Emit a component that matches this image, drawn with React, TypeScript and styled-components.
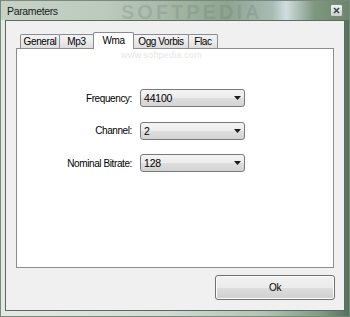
import { FC, Fragment } from 'react';
import styled, { createGlobalStyle } from 'styled-components';

const GlobalStyle = createGlobalStyle`
  html, body {
    margin: 0;
    padding: 0;
    background: #ffffff;
  }
  body {
    font-family: "Liberation Sans", Arial, sans-serif;
  }
`;

const Frame = styled.div`
  position: relative;
  box-sizing: border-box;
  width: 350px;
  height: 317px;
  display: flex;
  flex-direction: column;
  overflow: hidden;
  border: 1px solid #7b887d;
  background: linear-gradient(
    90deg,
    #e3eae4 0%,
    #d3ddd4 45%,
    #b3c4b4 75%,
    #7f9b82 92%,
    #52745a 100%
  );
`;

const TitleBar = styled.div`
  position: relative;
  height: 19px;
  display: flex;
  align-items: center;
  justify-content: space-between;
  padding: 0 6px 0 6px;
  background: linear-gradient(
    90deg,
    #c7d2c7 0%,
    #bccabd 30%,
    #a3b6a5 50%,
    #8ea490 65%,
    #a8bcb4 78%,
    #d0dde0 82%,
    #7e9880 90%,
    #6a876d 100%
  );
`;

const Title = styled.span`
  position: relative;
  z-index: 1;
  font-size: 10.5px;
  letter-spacing: -0.35px;
  color: #1a1a1a;
  margin-top: 1px;
`;

const Watermark = styled.span`
  position: absolute;
  left: 120px;
  top: 0;
  font-size: 20px;
  font-weight: bold;
  letter-spacing: 3px;
  color: rgba(100, 112, 106, 0.22);
`;

const CloseButton = styled.div`
  position: relative;
  z-index: 1;
  box-sizing: border-box;
  width: 13px;
  height: 13px;
  display: flex;
  align-items: center;
  justify-content: center;
  border: 1px solid #7d8a80;
  border-radius: 2px;
  background: linear-gradient(180deg, #eef2ef 0%, #c9d2cb 100%);
`;

const Client = styled.div`
  position: relative;
  flex: 1;
  margin: 0 4px 5px 4px;
  display: flex;
  flex-direction: column;
  padding: 11px 10px 10px 10px;
  background: #f0f0f0;
  border: 1px solid #5f6862;
`;

const TabStrip = styled.div`
  display: flex;
  align-items: flex-end;
  height: 16px;
  padding-left: 4px;
`;

const Tab = styled.div<{ $w: number; $active?: boolean }>`
  position: relative;
  box-sizing: border-box;
  width: ${({ $w }) => $w}px;
  height: ${({ $active }) => ($active ? 17 : 14)}px;
  margin-right: -1px;
  margin-bottom: ${({ $active }) => ($active ? -1 : 0)}px;
  z-index: ${({ $active }) => ($active ? 2 : 1)};
  display: flex;
  align-items: center;
  justify-content: center;
  padding-bottom: ${({ $active }) => ($active ? 2 : 0)}px;
  font-size: 10px;
  letter-spacing: -0.4px;
  color: #000;
  border: 1px solid #898c95;
  border-bottom: none;
  border-radius: 2px 2px 0 0;
  background: ${({ $active }) =>
    $active ? '#ffffff' : 'linear-gradient(180deg, #f3f3f3 0%, #ebebeb 50%, #dedede 100%)'};
`;

const Panel = styled.div`
  position: relative;
  flex: 1;
  box-sizing: border-box;
  background: #ffffff;
  border: 1px solid #898c95;
  padding-top: 40px;
`;

const SiteMark = styled.span`
  position: absolute;
  left: 104px;
  top: 1px;
  font-size: 9px;
  color: #e6e6e6;
  letter-spacing: 0.2px;
`;

const Form = styled.div`
  display: grid;
  grid-template-columns: 115px 105px;
  column-gap: 8px;
  row-gap: 14.5px;
  align-items: center;
`;

const Label = styled.label`
  text-align: right;
  font-size: 10px;
  letter-spacing: -0.4px;
  color: #000;
`;

const Combo = styled.div`
  box-sizing: border-box;
  height: 18px;
  display: flex;
  align-items: center;
  justify-content: space-between;
  padding: 0 3px 0 3px;
  border: 1px solid #7a7a7a;
  border-radius: 3px;
  background: linear-gradient(180deg, #f4f4f4 0%, #ececec 50%, #dfdfdf 51%, #d3d3d3 100%);
  font-size: 10.5px;
  letter-spacing: -0.2px;
  color: #000;
`;

const Footer = styled.div`
  display: flex;
  justify-content: flex-end;
  margin-top: 7px;
  margin-right: -1px;
`;

const Button = styled.button`
  box-sizing: border-box;
  width: 120px;
  height: 25px;
  padding: 0;
  border: 1px solid #707070;
  border-radius: 3px;
  box-shadow: inset 0 0 0 1px #fcfcfc;
  background: linear-gradient(180deg, #f2f2f2 0%, #ebebeb 50%, #dddddd 51%, #cfcfcf 100%);
  font-family: "Liberation Sans", Arial, sans-serif;
  font-size: 10px;
  letter-spacing: -0.3px;
  color: #000;
`;

const Arrow: FC = () => (
  <svg width="7" height="4" viewBox="0 0 7 4">
    <polygon points="0,0 7,0 3.5,4" fill="#1a1a1a" />
  </svg>
);

const CloseGlyph: FC = () => (
  <svg width="7" height="7" viewBox="0 0 7 7">
    <path d="M1 1 L6 6 M6 1 L1 6" stroke="#3d4a44" strokeWidth="1.6" />
  </svg>
);

const tabs = [
  { name: 'General', w: 40 },
  { name: 'Mp3', w: 35 },
  { name: 'Wma', w: 41 },
  { name: 'Ogg Vorbis', w: 56 },
  { name: 'Flac', w: 30 },
];

const fields = [
  { label: 'Frequency:', value: '44100' },
  { label: 'Channel:', value: '2' },
  { label: 'Nominal Bitrate:', value: '128' },
];

const App: FC = () => (
  <>
    <GlobalStyle />
    <Frame>
      <TitleBar>
        <Watermark>SOFTPEDIA</Watermark>
        <Title>Parameters</Title>
        <CloseButton>
          <CloseGlyph />
        </CloseButton>
      </TitleBar>
      <Client>
        <TabStrip>
          {tabs.map((t) => (
            <Tab key={t.name} $w={t.w} $active={t.name === 'Wma'}>
              {t.name}
            </Tab>
          ))}
        </TabStrip>
        <Panel>
          <SiteMark>www.softpedia.com</SiteMark>
          <Form>
            {fields.map((f) => (
              <Fragment key={f.label}>
                <Label>{f.label}</Label>
                <Combo>
                  <span>{f.value}</span>
                  <Arrow />
                </Combo>
              </Fragment>
            ))}
          </Form>
        </Panel>
        <Footer>
          <Button>Ok</Button>
        </Footer>
      </Client>
    </Frame>
  </>
);

export default App;
